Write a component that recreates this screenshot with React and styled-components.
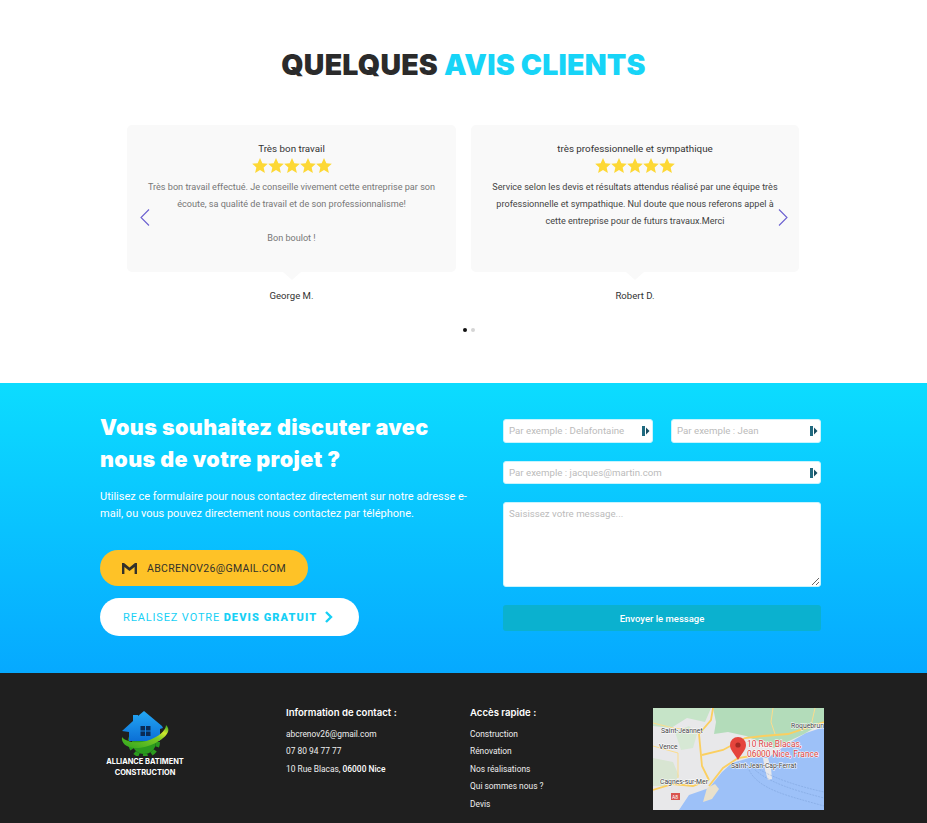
import React from 'react';
import styled, { createGlobalStyle } from 'styled-components';

const GlobalStyle = createGlobalStyle`
    html, body { margin: 0; padding: 0; background: #fff; }
    body { font-family: Roboto, "Liberation Sans", sans-serif; }
    * { box-sizing: border-box; }
`;

const reviews = [
    {
        title: 'Très bon travail',
        lines: ['Très bon travail effectué. Je conseille vivement cette entreprise par son', 'écoute, sa qualité de travail et de son professionnalisme!', '\u00a0', 'Bon boulot !'],
        author: 'George M.',
        muted: true,
    },
    {
        title: 'très professionnelle et sympathique',
        lines: ['Service selon les devis et résultats attendus réalisé par une équipe très', 'professionnelle et sympathique. Nul doute que nous referons appel à', 'cette entreprise pour de futurs travaux.Merci'],
        author: 'Robert D.',
    },
];

function Stars() {
    return (
        <StarRow>
            {[0, 1, 2, 3, 4].map((i) => (
                <svg key={i} width="16" height="15" viewBox="0 0 24 23">
                    <polygon points="12,0 15.6,8 24,8.8 17.6,14.4 19.5,23 12,18.5 4.5,23 6.4,14.4 0,8.8 8.4,8" fill="#fdd835" />
                </svg>
            ))}
        </StarRow>
    );
}

function Review({ review }) {
    return (
        <ReviewItem>
            <Bubble>
                <ReviewTitle>{review.title}</ReviewTitle>
                <Stars />
                <ReviewText $muted={review.muted}>
                    {review.lines.map((line, i) => <div key={i}>{line}</div>)}
                </ReviewText>
            </Bubble>
            <Author>{review.author}</Author>
        </ReviewItem>
    );
}

function Chevron({ flip }) {
    return (
        <svg width="10" height="17" viewBox="0 0 10 17" fill="none" stroke="#6a5fd0" strokeWidth="1.1">
            <path d={flip ? 'M1 .5l8 8-8 8' : 'M9 .5l-8 8 8 8'} />
        </svg>
    );
}

function FieldMark() {
    return (
        <MarkWrap>
            <svg width="8" height="10" viewBox="0 0 8 10">
                <path d="M0 0h3v10H0z" fill="#1f6a80" />
                <path d="M4 1.5l3.5 3.5L4 8.5z" fill="#174f63" />
            </svg>
        </MarkWrap>
    );
}

function MailIcon() {
    return (
        <svg width="15" height="11" viewBox="0 0 15 11">
            <path d="M0 0h2l5.5 4.4L13 0h2v11h-2.400V4L7.500 8 2.400 4v7H0z" fill="#33312a" />
        </svg>
    );
}

function Logo() {
    return (
        <svg width="50" height="46" viewBox="0 0 50 46">
            <defs>
                <linearGradient id="roof" x1="0" y1="0" x2="0" y2="1">
                    <stop offset="0" stopColor="#24a8f5" />
                    <stop offset="1" stopColor="#0b6fd6" />
                </linearGradient>
                <linearGradient id="swoosh" x1="0" y1="1" x2="1" y2="0">
                    <stop offset="0" stopColor="#2fa51f" />
                    <stop offset=".6" stopColor="#7cc925" />
                    <stop offset=".78" stopColor="#d2e82e" />
                    <stop offset="1" stopColor="#27a01f" />
                </linearGradient>
            </defs>
            <circle cx="24" cy="32" r="12" fill="#2b9a1e" />
            <circle cx="24" cy="32" r="14" fill="none" stroke="#2b9a1e" strokeWidth="4" strokeDasharray="5 4" />
            <path d="M2 21L13 11V5h5v1l6-5 18 15 1 2-3 1v12H9V22z" fill="url(#roof)" />
            <path d="M20.500 16h4.500v4.500h-4.500zM26 16h4.500v4.500H26zM20.500 21.500h4.500V26h-4.500zM26 21.500h4.500V26H26z" fill="#0a2b55" />
            <path d="M2 27C1 33 6 37 14 38c12 1 30-7 34-16 1-3 0-5-2-7 0 7-12 15-24 17-10 1-17-1-20-5z" fill="url(#swoosh)" />
        </svg>
    );
}

function MapPicture() {
    return (
        <svg width="171" height="102" viewBox="0 0 171 102" fontFamily="Roboto, sans-serif">
            <rect width="171" height="102" fill="#e8e8ea" />
            <path d="M0 0h58L52 14 34 10 18 20 0 18z" fill="#c6e4c8" />
            <path d="M60 0h111v14l-20 12-30 14-28-12-18-4-14 2 2-12z" fill="#b3dcba" />
            <path d="M22 24l14-6 8 8-4 14-12 2z" fill="#d6e8d4" />
            <path d="M0 50l20 4 6 14-8 10H0z" fill="#d8e5d2" />
            <path d="M26 102l10-15 20-7 13-16 10-9 17-5 20-1 20-14 17-10 18-6v85z" fill="#9dc1f8" />
            <path d="M54 80l8-4 4 5-7 10-9 3z" fill="#e9e1cc" />
            <path d="M110 50l5 0 3 10 1 11-4 1-3-10z" fill="#e8e8ea" />
            <g fill="none" stroke="#fbcf60" strokeWidth="1.8">
                <path d="M60 0l-2 12-12 14 3 32 7 14" />
                <path d="M49 47l21-5 22-12 18-2 25-2 36-12" />
                <path d="M0 82l20-6 20 2 16-6" />
                <path d="M56 78l14-18 15-10 25-4" />
            </g>
            <g fill="none" stroke="#fbdc8d" strokeWidth="1">
                <path d="M0 15l20 5 20 2 6 4" />
                <path d="M0 38l25 7v25" />
                <path d="M120 0l-2 14 4 12" />
                <path d="M162 0l-4 18" />
            </g>
            <g fill="none" stroke="#6f95cf" strokeWidth=".4" strokeDasharray="2 1">
                <path d="M96 62c10 20 40 26 75 36" />
                <path d="M100 60c14 14 40 22 71 30" />
                <path d="M104 60c16 10 40 18 67 24" />
            </g>
            <g fill="#3c4043" fontSize="6.8" stroke="#fff" strokeWidth="1" paintOrder="stroke">
                <text x="8" y="25">Saint-Jeannet</text>
                <text x="6" y="41">Vence</text>
                <text x="7" y="76">Cagnes-sur-Mer</text>
                <text x="138" y="20">Roquebrun</text>
                <text x="78" y="60">Saint-Jean-Cap-Ferrat</text>
            </g>
            <g fill="#d9403f" fontSize="8.4" stroke="#fff" strokeWidth="1" paintOrder="stroke">
                <text x="94" y="39">10 Rue Blacas,</text>
                <text x="94" y="49">06000 Nice, France</text>
            </g>
            <path d="M85 52c-4-7-8-10-8-15a8 8 0 0 1 16 0c0 5-4 8-8 15z" fill="#e5443c" />
            <circle cx="85" cy="37" r="2.600" fill="#a32a24" />
            <rect x="18" y="85" width="9" height="7" fill="#d9534f" />
            <text x="19" y="91" fontSize="5" fill="#fff">A8</text>
        </svg>
    );
}

export default function App() {
    return (
        <>
            <GlobalStyle />
            <ReviewsSection>
                <Heading>QUELQUES <span>AVIS CLIENTS</span></Heading>
                <Carousel>
                    {reviews.map((review) => <Review key={review.author} review={review} />)}
                    <Arrow $side="left"><Chevron /></Arrow>
                    <Arrow $side="right"><Chevron flip /></Arrow>
                </Carousel>
                <Dots>
                    <Dot $active />
                    <Dot />
                </Dots>
            </ReviewsSection>

            <ContactSection>
                <ContactIntro>
                    <ContactTitle>Vous souhaitez discuter avec<br />nous de votre projet ?</ContactTitle>
                    <ContactText>Utilisez ce formulaire pour nous contactez directement sur notre adresse e-mail, ou vous pouvez directement nous contactez par téléphone.</ContactText>
                    <MailButton><MailIcon />ABCRENOV26@GMAIL.COM</MailButton>
                    <QuoteButton>
                        REALISEZ VOTRE&nbsp;<b>DEVIS GRATUIT</b>
                        <svg width="9" height="12" viewBox="0 0 9 12" fill="none" stroke="#17d0f5" strokeWidth="2.4"><path d="M2 1l5 5-5 5" /></svg>
                    </QuoteButton>
                </ContactIntro>
                <ContactForm onSubmit={(e) => e.preventDefault()}>
                    <FieldRow>
                        <Field><Input placeholder="Par exemple : Delafontaine" /><FieldMark /></Field>
                        <Field><Input placeholder="Par exemple : Jean" /><FieldMark /></Field>
                    </FieldRow>
                    <Field><Input placeholder="Par exemple : jacques@martin.com" /><FieldMark /></Field>
                    <Message placeholder="Saisissez votre message..." />
                    <SendButton type="submit">Envoyer le message</SendButton>
                </ContactForm>
            </ContactSection>

            <Footer>
                <Brand>
                    <Logo />
                    <BrandName>ALLIANCE BATIMENT<br />CONSTRUCTION</BrandName>
                </Brand>
                <FooterColumn>
                    <FooterTitle>Information de contact :</FooterTitle>
                    <FooterLine>abcrenov26@gmail.com</FooterLine>
                    <FooterLine>07 80 94 77 77</FooterLine>
                    <FooterLine>10 Rue Blacas, <b>06000 Nice</b></FooterLine>
                </FooterColumn>
                <FooterColumn>
                    <FooterTitle>Accès rapide :</FooterTitle>
                    <FooterLine>Construction</FooterLine>
                    <FooterLine>Rénovation</FooterLine>
                    <FooterLine>Nos réalisations</FooterLine>
                    <FooterLine>Qui sommes nous ?</FooterLine>
                    <FooterLine>Devis</FooterLine>
                </FooterColumn>
                <MapFrame><MapPicture /></MapFrame>
            </Footer>
        </>
    );
}

const ReviewsSection = styled.section`
    height: 383px;
    padding-top: 47px;
    background: #fff;
`;

const Heading = styled.h2`
    margin: 0 0 42px;
    height: 36px;
    font-family: Inter, "Liberation Sans", sans-serif;
    font-size: 28.5px;
    line-height: 36px;
    font-weight: 900;
    letter-spacing: .2px;
    text-align: center;
    color: #2b2b2b;
    span { color: #17d4f7; }
`;

const Carousel = styled.div`
    position: relative;
    display: grid;
    grid-template-columns: 329px 328px;
    gap: 15px;
    width: 672px;
    margin-left: 127px;
`;

const Arrow = styled.div`
    position: absolute;
    top: 84px;
    ${(p) => (p.$side === 'left' ? 'left: 13px;' : 'right: 11px;')}
    line-height: 0;
`;

const ReviewItem = styled.div`
    display: flex;
    flex-direction: column;
    align-items: center;
`;

const Bubble = styled.div`
    position: relative;
    width: 100%;
    height: 147px;
    padding: 17px 8px 0;
    background: #f9f9f9;
    border-radius: 5px;
    text-align: center;
    &::after {
        content: '';
        position: absolute;
        left: 50%;
        bottom: -8px;
        margin-left: -9px;
        border-style: solid;
        border-width: 8px 9px 0;
        border-color: #f9f9f9 transparent transparent;
    }
`;

const ReviewTitle = styled.div`
    font-size: 9.8px;
    line-height: 13px;
    color: #333;
`;

const StarRow = styled.div`
    display: flex;
    justify-content: center;
    margin-top: 3px;
    height: 17px;
`;

const ReviewText = styled.div`
    margin-top: 4px;
    font-size: 9.1px;
    line-height: 17px;
    color: ${(p) => (p.$muted ? '#777' : '#444')};
`;

const Author = styled.div`
    margin-top: 18px;
    font-size: 9.6px;
    line-height: 12px;
    color: #333;
`;

const Dots = styled.div`
    display: flex;
    justify-content: center;
    gap: 4px;
    margin-top: 26px;
    padding-left: 11px;
`;

const Dot = styled.span`
    width: 4px;
    height: 4px;
    border-radius: 50%;
    background: ${(p) => (p.$active ? '#111' : '#d5d5d5')};
`;

const ContactSection = styled.section`
    display: grid;
    grid-template-columns: 368px 318px;
    gap: 35px;
    height: 290px;
    padding: 30px 0 0 100px;
    background: linear-gradient(180deg, #0cdcff 0%, #06a9ff 100%);
`;

const ContactIntro = styled.div`
    display: flex;
    flex-direction: column;
    align-items: flex-start;
`;

const ContactTitle = styled.h3`
    margin: -2px 0 0;
    font-family: Inter, "Liberation Sans", sans-serif;
    font-size: 21.5px;
    line-height: 32px;
    font-weight: 900;
    letter-spacing: .4px;
    color: #fff;
`;

const ContactText = styled.p`
    margin: 13px 0 0;
    font-size: 11px;
    line-height: 17px;
    color: #fff;
`;

const MailButton = styled.div`
    display: flex;
    align-items: center;
    gap: 10px;
    height: 36px;
    width: 208px;
    margin-top: 28px;
    padding-left: 22px;
    border-radius: 18px;
    background: #fec227;
    font-size: 10.5px;
    letter-spacing: .3px;
    color: #33312a;
`;

const QuoteButton = styled.div`
    display: flex;
    align-items: center;
    height: 38px;
    width: 259px;
    margin-top: 12px;
    padding-left: 23px;
    border-radius: 19px;
    background: #fff;
    font-size: 11px;
    letter-spacing: .85px;
    color: #17d0f5;
    b { font-weight: 900; letter-spacing: 1.1px; }
    svg { margin-left: 7px; }
`;

const ContactForm = styled.form`
    display: flex;
    flex-direction: column;
    gap: 18px;
    padding-top: 6px;
`;

const FieldRow = styled.div`
    display: grid;
    grid-template-columns: 150px 150px;
    gap: 18px;
`;

const Field = styled.div`
    position: relative;
    height: 23.5px;
`;

const Input = styled.input`
    display: block;
    width: 100%;
    height: 100%;
    padding: 0 5px;
    border: 1px solid #c9f4fd;
    border-radius: 3px;
    background: #fff;
    font-family: Roboto, sans-serif;
    font-size: 9.7px;
    outline: none;
    &::placeholder { color: #bbb; }
`;

const MarkWrap = styled.span`
    position: absolute;
    top: 7px;
    right: 3px;
    line-height: 0;
`;

const Message = styled.textarea`
    display: block;
    width: 100%;
    height: 85px;
    padding: 5px;
    border: 1px solid #c9f4fd;
    border-radius: 3px;
    background: #fff;
    font-family: Roboto, sans-serif;
    font-size: 9.7px;
    outline: none;
    &::placeholder { color: #bbb; }
`;

const SendButton = styled.button`
    height: 26px;
    border: 0;
    border-radius: 3px;
    background: #0bb1cf;
    font-family: Roboto, sans-serif;
    font-size: 9.5px;
    font-weight: 500;
    color: #fff;
`;

const Footer = styled.footer`
    display: grid;
    grid-template-columns: 186px 184px 183px 171px;
    height: 150px;
    padding: 34px 0 0 100px;
    background: #1f1f1f;
    color: #fff;
`;

const Brand = styled.div`
    display: flex;
    flex-direction: column;
    align-items: center;
    width: 90px;
    margin-top: 3px;
`;

const BrandName = styled.div`
    margin-top: 1px;
    font-family: Inter, sans-serif;
    font-size: 7.4px;
    line-height: 10.5px;
    font-weight: 700;
    text-align: center;
    white-space: nowrap;
`;

const FooterColumn = styled.div`
    display: flex;
    flex-direction: column;
`;

const FooterTitle = styled.div`
    font-family: Inter, sans-serif;
    font-size: 9.6px;
    line-height: 12px;
    font-weight: 600;
    margin-bottom: 6.5px;
`;

const FooterLine = styled.div`
    font-size: 8.4px;
    line-height: 17.6px;
    color: #eee;
    b { font-weight: 500; color: #fff; }
`;

const MapFrame = styled.div`
    line-height: 0;
    margin-top: 1px;
`;
